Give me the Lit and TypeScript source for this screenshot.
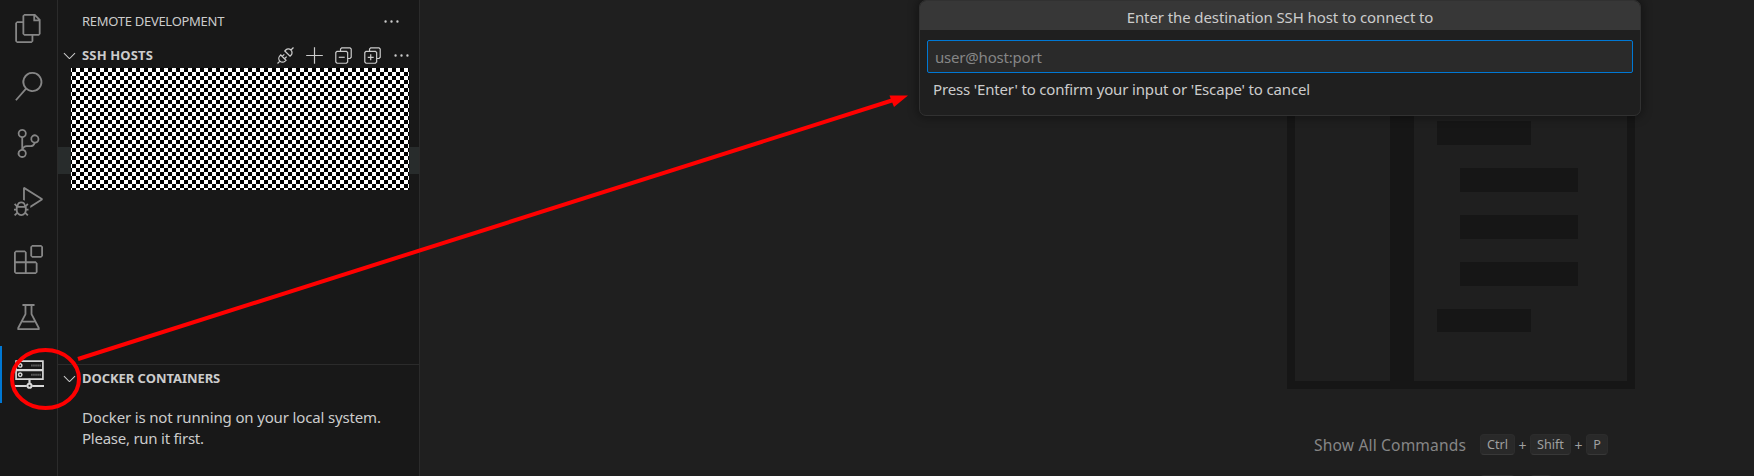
import { LitElement, html, svg, css } from "lit";
import { customElement } from "lit/decorators.js";

const activity = [
  { name: "files", icon: svg`<path d="M17.5 0h-9L7 1.5V6H2.5L1 7.5v15.07L2.5 24h12.07L16 22.57V18h4.7l1.3-1.43V4.5L17.5 0zm0 2.12l2.38 2.38H17.5V2.12zm-3 20.38h-12v-15H7v9.07L8.5 18h6v4.5zm6-6h-12v-15H16V6h4.5v10.5z"/>` },
  { name: "search", icon: svg`<path d="M15.25 0a8.25 8.25 0 0 0-6.18 13.72L1 22.88l1.12 1 8.05-9.12A8.251 8.251 0 1 0 15.25.01V0zm0 15a6.75 6.75 0 1 1 0-13.5 6.75 6.75 0 0 1 0 13.5z"/>` },
  { name: "source-control", icon: svg`<path d="M21.007 8.222A3.738 3.738 0 0 0 15.045 5.2a3.737 3.737 0 0 0 1.156 6.583 2.988 2.988 0 0 1-2.668 1.67h-2.99a4.456 4.456 0 0 0-2.989 1.165V7.4a3.737 3.737 0 1 0-1.494 0v9.117a3.776 3.776 0 1 0 1.816.099 2.99 2.99 0 0 1 2.668-1.667h2.99a4.484 4.484 0 0 0 4.223-3.039 3.736 3.736 0 0 0 3.25-3.687zM4.565 3.738a2.242 2.242 0 1 1 4.484 0 2.242 2.242 0 0 1-4.484 0zm4.484 16.441a2.242 2.242 0 1 1-4.484 0 2.242 2.242 0 0 1 4.484 0zm8.221-9.715a2.242 2.242 0 1 1 0-4.485 2.242 2.242 0 0 1 0 4.485z"/>` },
  { name: "debug", icon: svg`<path d="M10.94 13.5l-1.32 1.32a3.73 3.73 0 0 0-7.24 0L1.06 13.5 0 14.56l1.72 1.72-.22.22V18H0v1.5h1.5v.08c.077.489.214.966.41 1.42L0 22.94 1.06 24l1.65-1.65A4.308 4.308 0 0 0 6 24a4.31 4.31 0 0 0 3.29-1.65L10.94 24 12 22.94 10.09 21c.198-.464.336-.951.41-1.45v-.1H12V18h-1.5v-1.5l-.22-.22L12 14.56l-1.06-1.06zM6 13.5a2.25 2.25 0 0 1 2.25 2.25h-4.5A2.25 2.25 0 0 1 6 13.5zm3 6a3.33 3.33 0 0 1-3 3 3.33 3.33 0 0 1-3-3v-2.25h6v2.25zm14.76-9.9v1.26L13.5 17.37V15.6l8.5-5.37L9 2v9.46a5.07 5.07 0 0 0-1.5-.72V.63L8.64 0l15.12 9.6z"/>` },
  { name: "extensions", icon: svg`<path fill-rule="evenodd" d="M13.5 1.5L15 0h7.5L24 1.5V9l-1.5 1.5H15L13.5 9V1.5zm1.5 0V9h7.5V1.5H15zM0 15V6l1.5-1.5H9L10.5 6v7.5H18l1.5 1.5v7.5L18 24H1.5L0 22.5V15zm9-1.5V6H1.5v7.5H9zM9 15H1.5v7.5H9V15zm1.5 7.5H18V15h-7.5v7.5z"/>` },
  { name: "testing", icon: svg`<path fill="none" stroke="currentColor" stroke-width="1.500" stroke-linejoin="round" d="M7 2.500h10M9.500 2.500v7.500L3.500 21.500v1h17v-1L14.500 10V2.500M7 16.300h10"/>` },
  { name: "remote", icon: svg`<g fill="none" stroke="currentColor" stroke-width="1.400"><path d="M.9.900h22.200v7.300H.9zM.9 8.600h22.200v7.300H.9z"/><circle cx="4.300" cy="4.500" r="1.400" stroke-width="1.200"/><circle cx="4.300" cy="12.200" r="1.400" stroke-width="1.200"/><path stroke-width="1.700" stroke-dasharray="1 .7" opacity=".5" d="M13.500 4.500h8M13.500 12.200h8"/><path stroke-width="1.800" d="M0 21.500h9.800M14.200 21.500H24M12 15.600v3.800"/><circle cx="12" cy="21.300" r="1.700" stroke-width="1.700"/></g>` },
];

const dots = svg`<path d="M4 8a1 1 0 1 1-2 0 1 1 0 0 1 2 0zm5 0a1 1 0 1 1-2 0 1 1 0 0 1 2 0zm5 0a1 1 0 1 1-2 0 1 1 0 0 1 2 0z"/>`;
const chevron = svg`<path d="M7.976 10.072l4.357-4.357.62.618L8.284 11h-.618L3 6.333l.619-.618 4.357 4.357z"/>`;
const box = svg`<path fill="none" stroke="currentColor" d="M5.500 4.500v-2l1-1h7l1 1v7l-1 1h-2M1.500 5.500l1-1h8l1 1v8l-1 1h-8l-1-1z"/>`;
const actions = [
  svg`<g fill="none" stroke="currentColor" stroke-width="1.050" transform="rotate(-45 8 8)"><path d="M-1.500 8H1.300M5.500 4.900v6.200H4.400a3.100 3.100 0 0 1 0-6.200zM5.500 6.600H8M5.500 9.400H8M10.300 4.900v6.200h1.100a3.100 3.100 0 0 0 0-6.200zM14.500 8h3"/></g>`,
  svg`<path d="M15 7.500v1H8.500V15h-1V8.500H1v-1h6.500V1h1v6.500z"/>`,
  svg`${box}<path d="M4 9h5v1H4z"/>`,
  svg`${box}<path d="M4 9h5v1H4zM6 7h1v5H6z"/>`,
  dots,
];
const small = (g: unknown) => html`<svg class="ic" viewBox="0 0 16 16">${g}</svg>`;

@customElement("app-root")
export class AppRoot extends LitElement {
  static styles = css`
    :host { display: block; position: relative; width: 1754px; height: 476px; overflow: hidden; background: #1f1f1f; color: #ccc; font-family: "Noto Sans", "Open Sans", sans-serif; font-size: 15px; }
    * { box-sizing: border-box; }
    svg { display: block; fill: currentColor; }
    .shell { display: flex; height: 476px; }
    .bar { width: 58px; flex: none; background: #181818; border-right: 1px solid #2b2b2b; color: #868686; }
    .item { height: 57.6px; display: flex; align-items: center; padding-left: 14px; }
    .item svg { width: 29px; height: 29px; overflow: visible; }
    .item.on { color: #d7d7d7; border-left: 2px solid #0078d4; padding-left: 13px; }
    .side { width: 362px; flex: none; background: #181818; border-right: 1px solid #2b2b2b; display: flex; flex-direction: column; }
    .top { height: 42px; display: flex; align-items: center; justify-content: space-between; padding: 0 18px 0 24px; }
    .ic { width: 19px; height: 19px; flex: none; overflow: visible; }
    .t { white-space: nowrap; }
    .cap { font-size: 13px; letter-spacing: -.28px; }
    .head { height: 26px; display: flex; align-items: center; padding: 0 8px 0 2px; font-weight: 700; font-size: 13px; }
    .head .t { margin-left: 3px; flex: 1; }
    .h1 { letter-spacing: .15px; }
    .h2 { letter-spacing: -.05px; }
    .acts { display: flex; gap: 10px; padding-top: 1px; }
    .tree { height: 296px; }
    .tree::before { content: ""; display: table; }
    .rowsel { margin-top: 79px; height: 27px; background: #282c2c; }
    .mask { margin: -106px 10px 0 13px; height: 122px; position: relative;
      background: repeating-conic-gradient(#000 0 25%, #fff 0 50%) -3px 0 / 8px 8px; }
    .docker { border-top: 1px solid #2b2b2b; }
    .msg { padding: 16px 24px; line-height: 21px; }
    .m1 { letter-spacing: -.15px; }
    .m2 { letter-spacing: -.25px; }
    .ed { flex: 1; padding-left: 867px; }
    .press { width: 348px; height: 389px; background: #161616; padding: 0 8px 8px; display: flex; gap: 24px; }
    .pl { width: 95px; background: #1f1f1f; }
    .pr { flex: 1; background: #1f1f1f; padding: 121px 0 0 23px; display: flex; flex-direction: column; gap: 23px; }
    .b { width: 94px; height: 23.9px; background: #161616; }
    .b.w { width: 118px; margin-left: 23px; }
    .cmd { margin: 45px 0 0 27px; height: 21px; display: flex; align-items: center; color: #868686; }
    .cmd .t { width: 166px; font-size: 15.6px; letter-spacing: .15px; }
    .key { flex: none; height: 21px; border-radius: 4px; background: #292929; border: 1px solid #2c2c2c; border-bottom-color: #383838; color: #a0a0a0; font-size: 12.6px; line-height: 19px; text-align: center; }
    .k1 { width: 35px; }
    .k2 { width: 41px; }
    .k3 { width: 22px; }
    .plus { flex: none; width: 15px; text-align: center; color: #a0a0a0; font-size: 14px; padding-top: 1px; }
    .next { margin-top: 20px; padding-left: 166px; gap: 15px; }
    .quick { position: absolute; left: 919px; top: 0; width: 722px; height: 116px; border: 1px solid #313131; border-radius: 7px; background: #1f1f1f; box-shadow: 0 0 10px 2px rgba(0,0,0,.36); overflow: hidden; }
    .title { height: 29px; background: #373737; display: flex; justify-content: center; align-items: center; padding-top: 2px; }
    .q1 { letter-spacing: -.1px; }
    .field { margin: 10px 7px 0; height: 33px; border: 1px solid #0078d4; border-radius: 2px; background: #2a2a2a; color: #868686; padding-left: 7px; display: flex; align-items: center; }
    .q2 { letter-spacing: -.2px; }
    .hint { padding: 6px 13px; line-height: 20px; }
    .q3 { letter-spacing: -.16px; }
    .ink { position: absolute; left: 0; top: 0; pointer-events: none; }
  `;

  render() {
    return html`
      <div class="shell">
        <nav class="bar">
          ${activity.map((a) => html`<div class="item ${a.name === "remote" ? "on" : ""}"><svg viewBox="0 0 24 24">${a.icon}</svg></div>`)}
        </nav>
        <aside class="side">
          <div class="top"><span class="t cap">REMOTE DEVELOPMENT</span>${small(dots)}</div>
          <div class="head">${small(chevron)}<span class="t h1">SSH HOSTS</span><div class="acts">${actions.map(small)}</div></div>
          <div class="tree"><div class="rowsel"></div><div class="mask"></div></div>
          <div class="docker">
            <div class="head">${small(chevron)}<span class="t h2">DOCKER CONTAINERS</span></div>
            <div class="msg"><span class="t m1">Docker is not running on your local system.</span><br /><span class="t m2">Please, run it first.</span></div>
          </div>
        </aside>
        <main class="ed">
          <div class="press">
            <div class="pl"></div>
            <div class="pr">${["", "w", "w", "w", ""].map((w) => html`<div class="b ${w}"></div>`)}</div>
          </div>
          <div class="cmd"><span class="t">Show All Commands</span><span class="key k1">Ctrl</span><span class="plus">+</span><span class="key k2">Shift</span><span class="plus">+</span><span class="key k3">P</span></div>
          <div class="cmd next"><span class="key k1"></span><span class="key k3"></span></div>
        </main>
      </div>
      <section class="quick">
        <div class="title"><span class="t q1">Enter the destination SSH host to connect to</span></div>
        <div class="field"><span class="t q2">user@host:port</span></div>
        <div class="hint"><span class="t q3">Press 'Enter' to confirm your input or 'Escape' to cancel</span></div>
      </section>
      <svg class="ink" width="1754" height="476">
        <ellipse cx="45.500" cy="379" rx="33.500" ry="29" fill="none" stroke="#f00" stroke-width="4"/>
        <path d="M78 359L895 99.500" stroke="#f00" stroke-width="4"/>
        <path d="M908 95.500L889.500 95.500L894 107z" fill="#f00"/>
      </svg>
    `;
  }
}
